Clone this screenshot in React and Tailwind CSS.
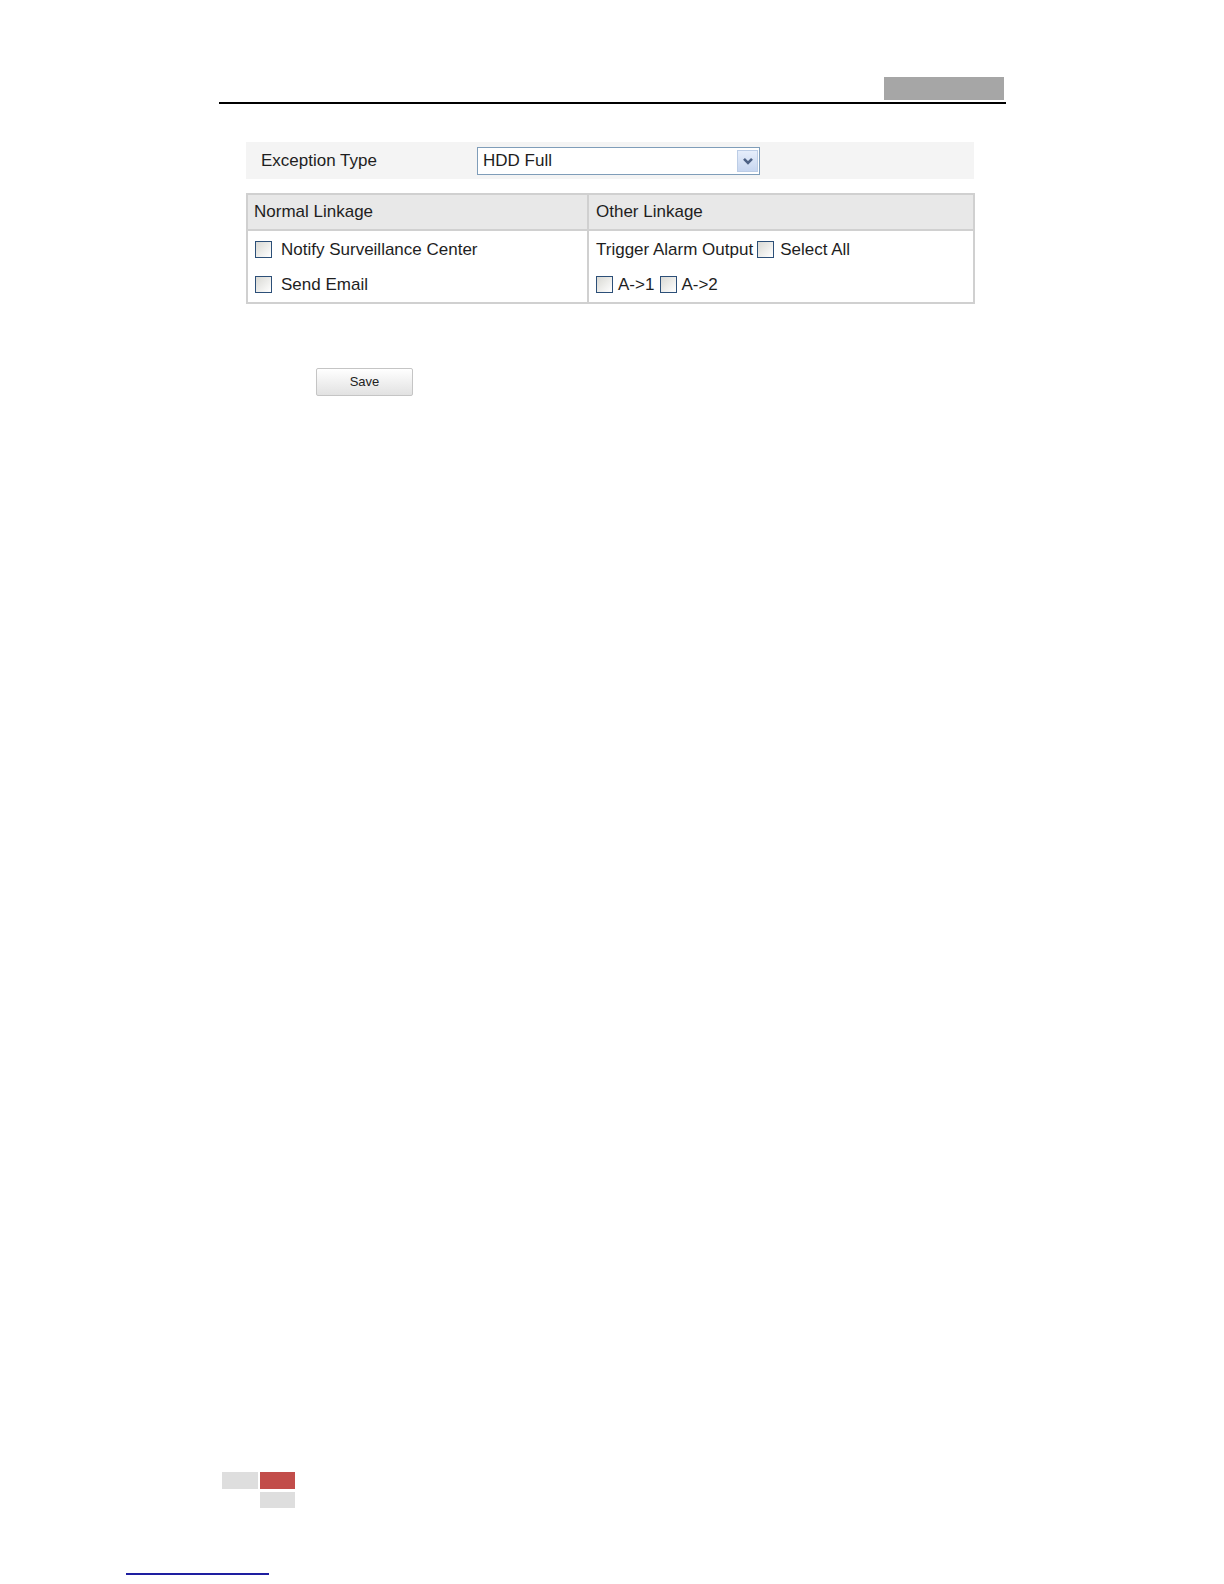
import React from "react";

const Checkbox = ({ className = "" }) => (
  <span
    className={
      "inline-block w-[17px] h-[17px] shrink-0 border border-[#2c4f78] bg-gradient-to-br from-[#d9d9d4] to-white " +
      className
    }
  />
);

const App = () => {
  return (
    <div className="w-[1224px] h-[1584px] flex flex-col bg-white text-[#1e1e1e] font-['Liberation_Sans',Arial,sans-serif]">
      {/* page header */}
      <div className="ml-[219px] mt-[77px] w-[787px]">
        <div className="flex justify-end pr-[2px]">
          <div className="w-[120px] h-[23px] bg-[#a6a6a6]" />
        </div>
        <div className="mt-[2px] h-[2px] bg-black" />
      </div>

      {/* exception type */}
      <div className="ml-[246px] mt-[38px] w-[728px] h-[37px] bg-[#f4f4f4] flex items-center text-[17px]">
        <span className="w-[231px] pl-[15px] pt-[1px]">Exception Type</span>
        <div className="w-[283px] h-[28px] border border-[#7f9db9] bg-white flex items-center">
          <span className="flex-1 pl-[5px] pt-[1px]">HDD Full</span>
          <span className="w-[21px] h-[22px] mr-[1px] border border-[#bccde6] bg-gradient-to-b from-[#e6eefb] to-[#c7d6f0] flex items-center justify-center">
            <svg width="12" height="8" viewBox="0 0 12 8">
              <polyline
                points="2,1.8 6,5.8 10,1.8"
                fill="none"
                stroke="#4d6185"
                strokeWidth="2.6"
              />
            </svg>
          </span>
        </div>
      </div>

      {/* linkage table */}
      <div className="ml-[246px] mt-[14px] w-[729px] border-2 border-[#d0d0d0] text-[17px]">
        <div className="flex h-[36px] bg-[#e8e8e8] border-b-2 border-[#d0d0d0]">
          <div className="w-[341px] border-r-2 border-[#d0d0d0] pl-[6px] flex items-center pb-[1px]">
            Normal Linkage
          </div>
          <div className="flex-1 pl-[7px] flex items-center pb-[1px]">Other Linkage</div>
        </div>
        <div className="flex">
          <div className="w-[341px] border-r-2 border-[#d0d0d0] pl-[7px]">
            <div className="h-[36px] flex items-center pt-[1px]">
              <Checkbox />
              <span className="ml-[9px]">Notify Surveillance Center</span>
            </div>
            <div className="h-[35px] flex items-center">
              <Checkbox />
              <span className="ml-[9px]">Send Email</span>
            </div>
          </div>
          <div className="flex-1 pl-[7px]">
            <div className="h-[36px] flex items-center pt-[1px]">
              <span>Trigger Alarm Output</span>
              <Checkbox className="ml-[4px]" />
              <span className="ml-[6px]">Select All</span>
            </div>
            <div className="h-[35px] flex items-center">
              <Checkbox />
              <span className="ml-[5px]">A-&gt;1</span>
              <Checkbox className="ml-[6px]" />
              <span className="ml-[4px]">A-&gt;2</span>
            </div>
          </div>
        </div>
      </div>

      <button className="ml-[316px] mt-[64px] w-[97px] h-[28px] border border-[#c5c5c5] rounded-[2px] bg-gradient-to-b from-white to-[#e2e2e2] text-[13px] text-[#222] flex items-center justify-center">
        Save
      </button>

      <div className="flex-1" />

      {/* page footer */}
      <div className="ml-[222px]">
        <div className="flex gap-[2px]">
          <div className="w-[36px] h-[17px] bg-[#dedede]" />
          <div className="w-[35px] h-[17px] bg-[#c24d4a]" />
        </div>
        <div className="ml-[38px] mt-[3px] w-[35px] h-[16px] bg-[#dedede]" />
      </div>
      <div className="ml-[126px] mt-[65px] mb-[9px] w-[143px] h-[2px] bg-[#1e1ea0]" />
    </div>
  );
};

export default App;
